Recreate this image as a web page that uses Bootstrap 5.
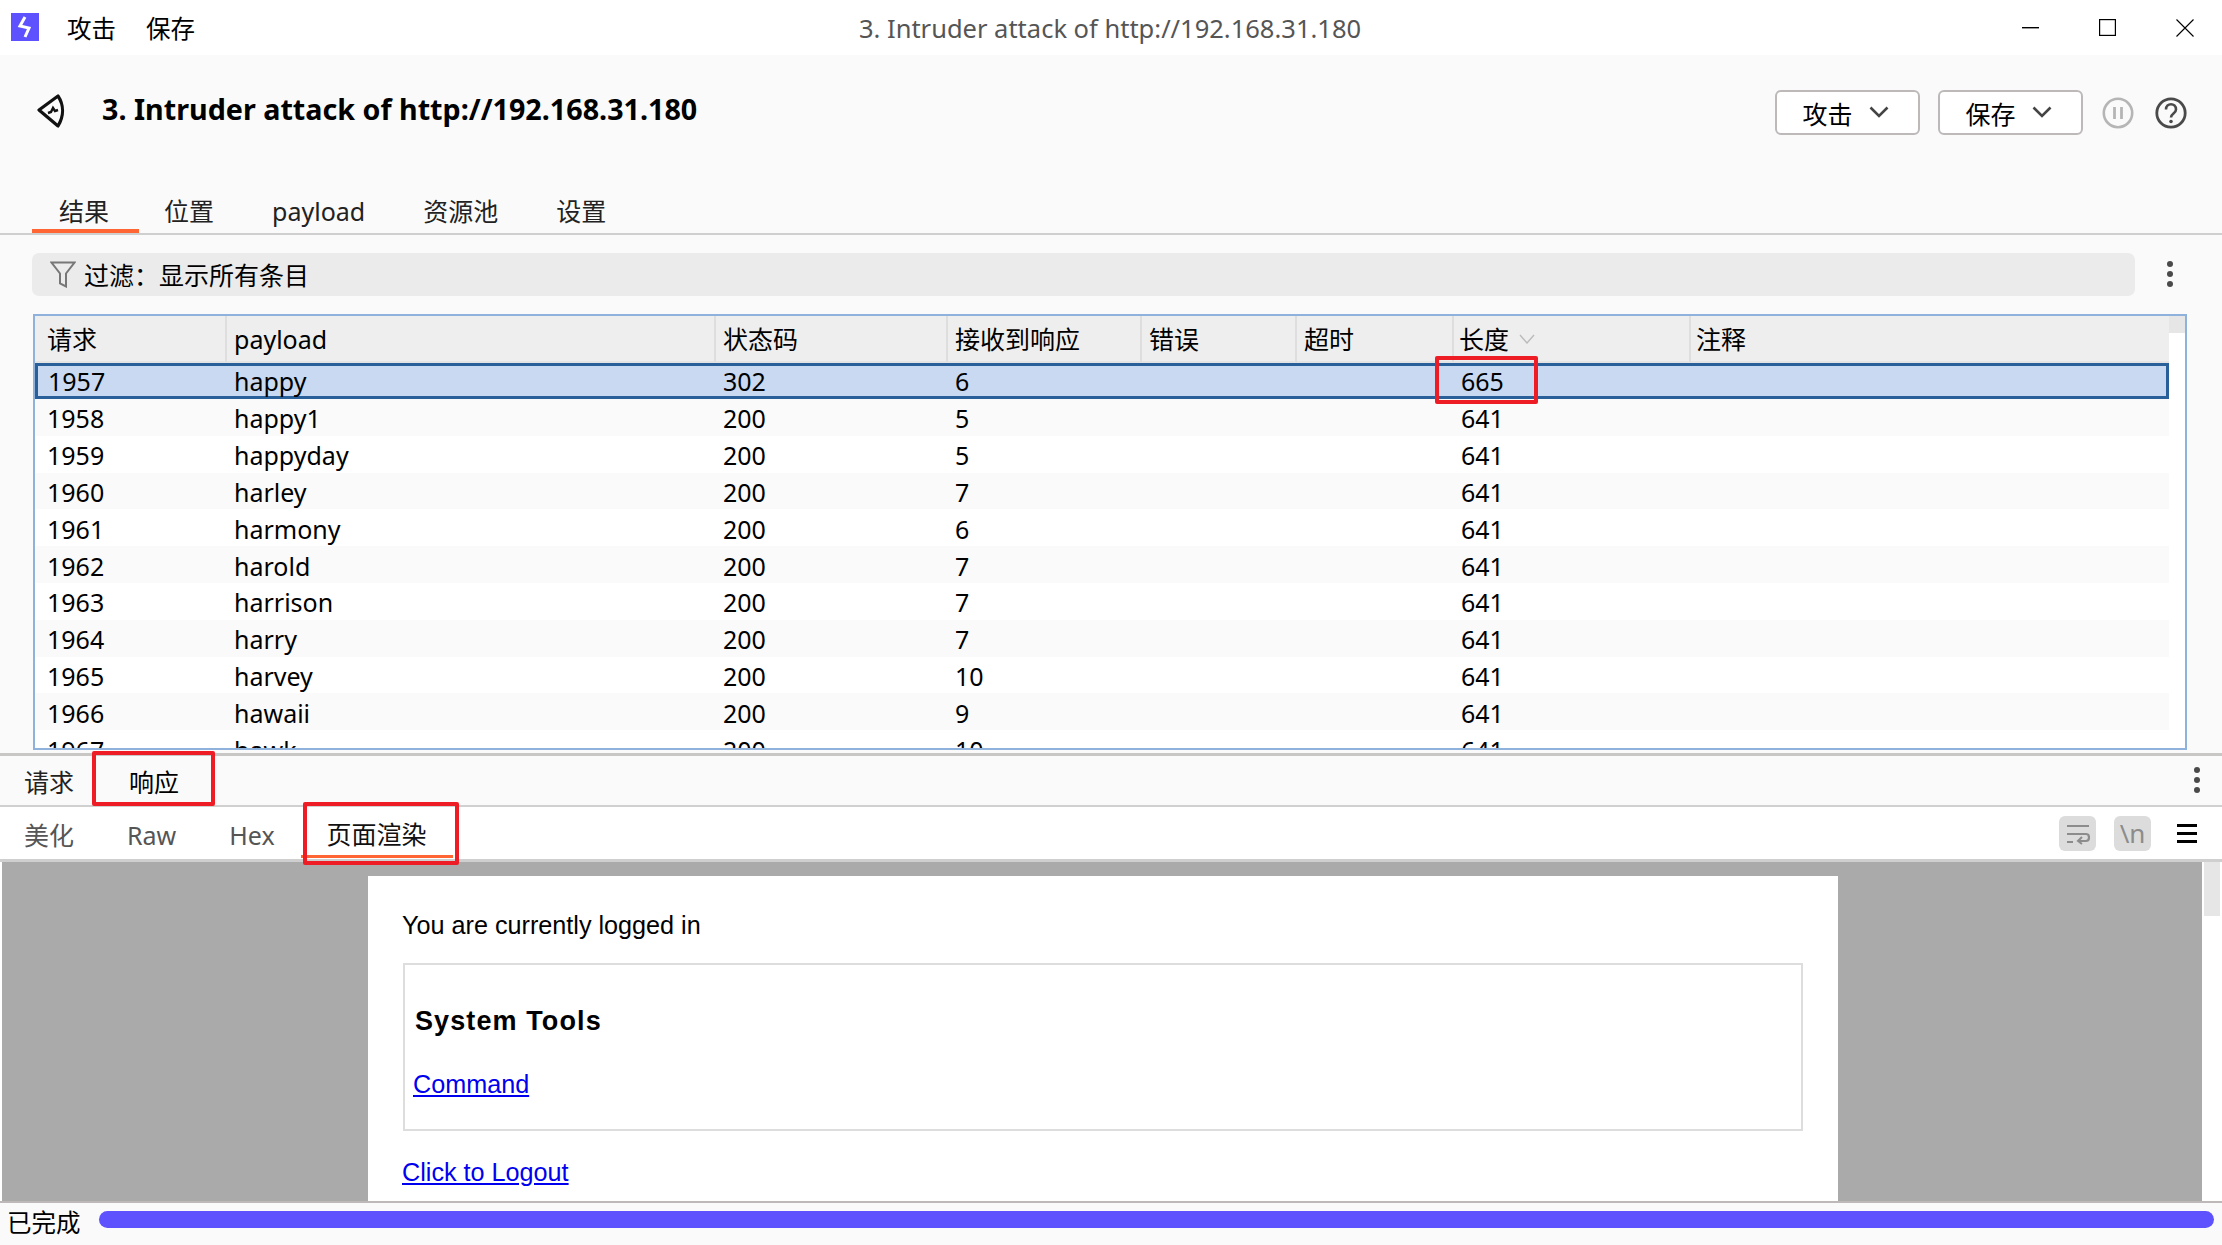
<!DOCTYPE html>
<html lang="zh-CN">
<head>
    <meta charset="UTF-8">
    <meta name="viewport" content="width=device-width, initial-scale=1.0">
    <title>3. Intruder attack of http://192.168.31.180</title>
    <link href="https://cdn.jsdelivr.net/npm/bootstrap@5.3.3/dist/css/bootstrap.min.css" rel="stylesheet">
    <style>
        html, body { height: 100%; }
        body {
            width: 2222px; height: 1245px; overflow: hidden; background: #fafafa; color: #000;
            font-family: "Noto Sans", "Noto Sans CJK SC", sans-serif; font-size: 25px; line-height: 1.2;
        }
        .app-shell { position: relative; height: 1245px; }

        /* title bar */
        .title-bar { height: 55px; background: #fff; padding-top: 2px; }
        .title-side { width: 600px; }
        .title-text { color: #555; font-size: 25.5px; padding-right: 2px; }
        .logo-box { margin-left: 11px; margin-right: 28px; position: relative; top: -1px; }
        .menu-item { margin-right: 30px; font-size: 24.5px; }
        .win-btn { margin-right: 28px; position: relative; top: -1px; }
        .win-gap { margin-right: 60px; }

        /* heading + tabs */
        .attack-head { height: 180px; border-bottom: 2px solid #cfcfcf; }
        .heading-row { height: 111px; padding-left: 37px; }
        .heading-text { font-size: 28.7px; font-weight: 700; margin: 0 0 0 36px; line-height: 1; position: relative; top: -1px; }
        .head-tools { padding-top: 4px; }
        .burp-btn {
            width: 145px; height: 45px; padding: 0 4px 0 0; margin-right: 18px; font-size: 25px; line-height: 1;
            color: #000; background: #fff; border: 2px solid #bdb9b9; border-radius: 6px;
        }
        .burp-btn svg { margin-left: 16px; position: relative; top: -1px; }
        .btn-label { padding-top: 4px; }
        .pause-icon { margin: 0 21px 0 1px; }
        .help-icon { margin-right: 35px; }
        .tab-strip { padding-left: 32px; height: 67px; }
        .tab-item {
            padding: 15px 28px 0; margin-top: 15px; color: #222; font-size: 25px;
            border-bottom: 4px solid transparent; box-sizing: content-box; height: 33px;
        }
        .tab-item.on { border-bottom-color: #ff6633; padding-left: 27px; padding-right: 30px; margin-right: -3px; }
        .tab-item.gap-a { padding-right: 30px; }
        .tab-item.gap-b { padding-right: 30px; }

        /* filter */
        .filter-row { padding: 18px 0 0 32px; height: 79px; }
        .filter-box { width: 2103px; height: 43px; background: #ebebeb; border-radius: 7px; padding-left: 18px; font-size: 25px; }
        .filter-box svg { margin-right: 8px; }
        .kebab-col { width: 6px; margin: 8px 0 0 32px; }
        .dot-stack span { display: block; width: 6px; height: 6px; border-radius: 50%; background: #4a4a4a; margin-bottom: 4px; }
        .kebab-right { margin: 11px 22px 0 0; }

        /* results table */
        .result-wrap { margin-left: 33px; width: 2154px; height: 436px; border: 2px solid #8fb2dc; background: #fff; overflow: hidden; }
        .result-pane { width: 2134px; height: 432px; overflow: hidden; }
        .scroll-col { width: 16px; background: #fff; }
        .scroll-col div { height: 17px; background: #e6e6e6; }
        .result-table { width: 2134px; table-layout: fixed; margin: 0; border-collapse: separate; border-spacing: 0; font-size: 25px; }
        .result-table th, .result-table td {
            padding: 0 0 0 7px; border: 0; font-weight: 400; color: #000; white-space: nowrap; vertical-align: middle; box-shadow: none;
        }
        .result-table th { height: 47px; padding-top: 1px; background: #eee; border-right: 2px solid #dedede; border-bottom: 2px solid #e4e4e4; }
        .result-table th:last-child { border-right: 0; }
        .result-table th.w-len, .result-table th:last-child { padding-left: 5px; }
        .sort-mark { vertical-align: 5px; margin-left: 3px; }
        .result-table td { height: 36.8px; line-height: 30px; padding-top: 2px; background: #fff; }
        .result-table th:first-child, .result-table td:first-child { padding-left: 12px; }
        .result-table tr.alt td { background: #fafafa; }
        .result-table tr.sel td { height: 36px; padding-top: 0; background: #c8d9f1; border-top: 3px solid #2a6099; border-bottom: 3px solid #2a6099; }
        .result-table tr.sel td:first-child { border-left: 3px solid #2a6099; padding-left: 10px; }
        .result-table tr.sel td:last-child { border-right: 3px solid #2a6099; }
        .w-req { width: 192px; } .w-pay { width: 489px; } .w-code { width: 232px; } .w-time { width: 194px; }
        .w-err { width: 155px; } .w-out { width: 157px; } .w-len { width: 237px; }

        /* request / response */
        .split-bar { height: 54px; margin-top: 3px; border-top: 3px solid #c9c6c6; border-bottom: 2px solid #d0d0d0; }
        .sub-tab { padding: 2px 28px 0 24px; font-size: 25px; height: 49px; line-height: 49px; color: #222; }
        .sub-tab.on { width: 107px; margin-left: 4px; padding: 2px 0 0 23px; color: #000; border-bottom: 3px solid #ff6633; }
        .view-bar { height: 55px; background: #fff; border-bottom: 3px solid #cfcfcf; }
        .view-tab { padding: 2px 26px 0 27px; height: 51px; line-height: 52px; color: #555; font-size: 25px; }
        .view-tab:first-child { padding-left: 24px; }
        .view-tab.on { color: #111; padding: 2px 26px 0 26px; height: 51px; border-bottom: 3px solid #ff6633; line-height: 50px; }
        .tool-zone { height: 52px; padding-top: 1px; }
        .tool-chip { width: 37px; height: 35px; border-radius: 6px; background: #dcdcdc; color: #8c8c8c; margin-right: 18px; font-size: 26px; }
        .burger-lines { width: 20px; margin: 0 25px 0 8px; }
        .burger-lines span { display: block; height: 3px; background: #000; margin: 5px 0; }

        /* rendered page */
        .render-area { height: 341px; background: #fff; border-bottom: 2px solid #bdb9b9; overflow: hidden; }
        .gray-stage { margin-left: 2px; width: 2200px; height: 339px; background: #aaa; padding: 14px 0 0 366px; }
        .web-page { width: 1470px; height: 325px; background: #fff; padding-left: 34px; overflow: hidden; font-family: "Liberation Sans", Arial, sans-serif; font-size: 25.2px; line-height: 30px; color: #000; }
        .web-page p { margin: 0; }
        .login-line { padding-top: 34px; }
        .tool-box { width: 1400px; height: 168px; margin: 23px 0 26px 1px; border: 2px solid #ddd; padding: 41px 0 0 8px; }
        .tool-box h3 { font-family: inherit; font-size: 27px; font-weight: 700; letter-spacing: 1.1px; line-height: 30px; margin: 0 0 33px 2px; }
        .web-page a { color: #00e; text-decoration: underline; }
        .page-scroll { width: 20px; background: #fff; }
        .page-scroll div { width: 16px; height: 54px; margin-left: 2px; background: #e6e6e6; }

        /* status */
        .status-row { height: 42px; padding: 8px 8px 0 7px; }
        .status-label { width: 92px; font-size: 24.5px; line-height: 30px; margin-top: -3px; }
        .attack-bar { height: 17px; background: #5e52ff; border-radius: 9px; }

        /* red annotation boxes drawn over the shot */
        .red-box { position: absolute; border: 4px solid #ee1c25; border-radius: 2px; pointer-events: none; }
        .rb-len { left: 1435px; top: 356px; width: 103px; height: 48px; }
        .rb-resp { left: 92px; top: 751px; width: 123px; height: 55px; }
        .rb-render { left: 303px; top: 802px; width: 156px; height: 63px; }
    </style>
</head>
<body>
<div class="app-shell">

    <!-- 標題列 -->
    <div class="title-bar d-flex align-items-center">
        <div class="title-side d-flex align-items-center">
            <svg class="logo-box" width="28" height="28" viewBox="0 0 28 28"><rect width="28" height="28" fill="#5e52ff"/><path d="M14 4 9 13l9 2-4 9" fill="none" stroke="#fff" stroke-width="3"/></svg>
            <span class="menu-item">攻击</span>
            <span class="menu-item">保存</span>
        </div>
        <div class="flex-fill text-center title-text">3. Intruder attack of http://192.168.31.180</div>
        <div class="title-side d-flex align-items-center justify-content-end">
            <svg class="win-btn win-gap" width="17" height="2" viewBox="0 0 17 2"><rect width="17" height="1.4" fill="#000"/></svg>
            <svg class="win-btn win-gap" width="17" height="17" viewBox="0 0 17 17"><rect x=".6" y=".6" width="15.8" height="15.8" fill="none" stroke="#000" stroke-width="1.2"/></svg>
            <svg class="win-btn" width="18" height="18" viewBox="0 0 18 18"><path d="M.5.5l17 17M17.5.5l-17 17" stroke="#000" stroke-width="1.1"/></svg>
        </div>
    </div>

    <!-- 攻擊標題與分頁 -->
    <div class="attack-head">
        <div class="heading-row d-flex align-items-center">
            <svg width="29" height="36" viewBox="0 0 29 36"><path d="M2 17 21 3c6 9 6 20 0 30z" fill="none" stroke="#111" stroke-width="3.2" stroke-linejoin="round"/><path d="M11 20l3-1 2-4 2 3 3-1" fill="none" stroke="#111" stroke-width="2.4"/></svg>
            <h1 class="heading-text">3. Intruder attack of http://192.168.31.180</h1>
            <div class="ms-auto d-flex align-items-center head-tools">
                <button type="button" class="btn burp-btn d-flex align-items-center justify-content-center"><span class="btn-label">攻击</span><svg width="20" height="12" viewBox="0 0 20 12"><path d="M1.5 1.5 10 10l8.5-8.5" fill="none" stroke="#444" stroke-width="2.6"/></svg></button>
                <button type="button" class="btn burp-btn d-flex align-items-center justify-content-center"><span class="btn-label">保存</span><svg width="20" height="12" viewBox="0 0 20 12"><path d="M1.5 1.5 10 10l8.5-8.5" fill="none" stroke="#444" stroke-width="2.6"/></svg></button>
                <svg class="pause-icon" width="32" height="32" viewBox="0 0 32 32"><circle cx="16" cy="16" r="14.2" fill="none" stroke="#b5b5b5" stroke-width="2.6"/><path d="M12.5 10v12M19.5 10v12" stroke="#b5b5b5" stroke-width="2.8"/></svg>
                <svg class="help-icon" width="32" height="32" viewBox="0 0 32 32"><circle cx="16" cy="16" r="14.2" fill="none" stroke="#4a4a4a" stroke-width="2.8"/><path d="M11 12.500c0-7 10-7 10 0 0 4-5 4-5 8" fill="none" stroke="#4a4a4a" stroke-width="2.6"/><circle cx="16" cy="24.500" r="1.800" fill="#4a4a4a"/></svg>
            </div>
        </div>
        <div class="nav tab-strip">
            <div class="tab-item on">结果</div>
            <div class="tab-item gap-a">位置</div>
            <div class="tab-item gap-b">payload</div>
            <div class="tab-item gap-b">资源池</div>
            <div class="tab-item">设置</div>
        </div>
    </div>

    <!-- 過濾 -->
    <div class="filter-row d-flex">
        <div class="filter-box d-flex align-items-center">
            <svg width="26" height="27" viewBox="0 0 26 27"><path d="M1.500 1.500h23l-8.500 11v13l-6-3v-10z" fill="none" stroke="#777" stroke-width="2"/></svg>
            <span>过滤：显示所有条目</span>
        </div>
        <div class="kebab-col dot-stack"><span></span><span></span><span></span></div>
    </div>

    <!-- 結果表格 -->
    <div class="result-wrap d-flex">
        <div class="result-pane">
            <table class="table result-table">
                <thead>
                <tr>
                    <th class="w-req">请求</th><th class="w-pay">payload</th><th class="w-code">状态码</th><th class="w-time">接收到响应</th><th class="w-err">错误</th><th class="w-out">超时</th>
                    <th class="w-len">长度 <svg class="sort-mark" width="16" height="10" viewBox="0 0 16 10"><path d="M1 1l7 8 7-8" fill="none" stroke="#bbb" stroke-width="1.400"/></svg></th><th>注释</th>
                </tr>
                </thead>
                <tbody id="rows"></tbody>
            </table>
        </div>
        <div class="scroll-col"><div></div></div>
    </div>

    <!-- 請求/響應 -->
    <div class="split-bar d-flex justify-content-between">
        <div class="d-flex">
            <div class="sub-tab">请求</div>
            <div class="sub-tab on">响应</div>
        </div>
        <div class="dot-stack kebab-right"><span></span><span></span><span></span></div>
    </div>
    <div class="view-bar d-flex align-items-start">
        <div class="view-tab">美化</div>
        <div class="view-tab">Raw</div>
        <div class="view-tab">Hex</div>
        <div class="view-tab on">页面渲染</div>
        <div class="ms-auto d-flex align-items-center tool-zone">
            <div class="tool-chip d-flex align-items-center justify-content-center">
                <svg width="24" height="22" viewBox="0 0 24 22"><path d="M1 3h22M1 11h19c4 0 4 7 0 7h-7M1 19h6" fill="none" stroke="#8c8c8c" stroke-width="2.2"/><path d="M16 14l-4 4 4 3" fill="none" stroke="#8c8c8c" stroke-width="2"/></svg>
            </div>
            <div class="tool-chip d-flex align-items-center justify-content-center">\n</div>
            <div class="burger-lines"><span></span><span></span><span></span></div>
        </div>
    </div>

    <!-- 頁面渲染 -->
    <div class="render-area d-flex">
        <div class="gray-stage">
            <div class="web-page">
                <p class="login-line">You are currently logged in</p>
                <div class="tool-box">
                    <h3>System Tools</h3>
                    <p><a href="#">Command</a></p>
                </div>
                <p><a href="#">Click to Logout</a></p>
            </div>
        </div>
        <div class="page-scroll"><div></div></div>
    </div>

    <!-- 狀態列 -->
    <div class="status-row d-flex align-items-start">
        <div class="status-label">已完成</div>
        <div class="attack-bar flex-fill"></div>
    </div>

    <div class="red-box rb-len"></div>
    <div class="red-box rb-resp"></div>
    <div class="red-box rb-render"></div>
</div>

<script src="https://cdn.jsdelivr.net/npm/bootstrap@5.3.3/dist/js/bootstrap.bundle.min.js"></script>
<script>
    const results = [
        [1957, 'happy', 302, 6, 665],
        [1958, 'happy1', 200, 5, 641],
        [1959, 'happyday', 200, 5, 641],
        [1960, 'harley', 200, 7, 641],
        [1961, 'harmony', 200, 6, 641],
        [1962, 'harold', 200, 7, 641],
        [1963, 'harrison', 200, 7, 641],
        [1964, 'harry', 200, 7, 641],
        [1965, 'harvey', 200, 10, 641],
        [1966, 'hawaii', 200, 9, 641],
        [1967, 'hawk', 200, 10, 641]
    ];

    // 第一列是選取中的，之後隔列淡灰
    document.getElementById('rows').innerHTML = results.map((r, i) => {
        const cls = i === 0 ? 'sel' : (i % 2 === 1 ? 'alt' : '');
        return `<tr class="${cls}"><td>${r[0]}</td><td>${r[1]}</td><td>${r[2]}</td><td>${r[3]}</td><td></td><td></td><td>${r[4]}</td><td></td></tr>`;
    }).join('');
</script>
</body>
</html>
